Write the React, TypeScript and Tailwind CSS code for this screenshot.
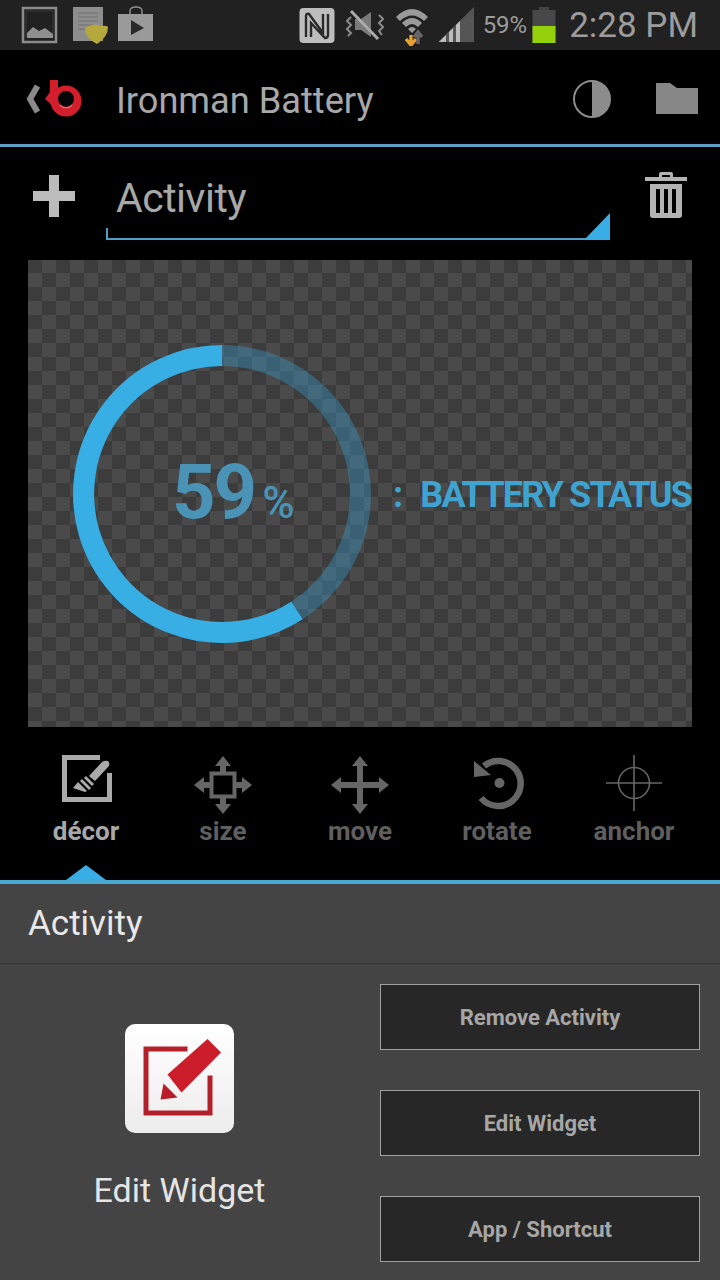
import React from 'react';

const font = { fontFamily: 'Roboto, sans-serif' };

const StatusIcons = () => (
  <>
    <svg width="38" height="38" viewBox="0 0 38 38" className="ml-[21px] shrink-0">
      <rect x="2" y="2" width="33" height="34" fill="none" stroke="#8c8c8c" strokeWidth="2.5" />
      <rect x="5" y="5" width="27" height="26" fill="none" stroke="#3a3a3a" strokeWidth="1" />
      <path d="M6 32 L6 27 L12 21 L18 25 L24 22 L32 28 L32 32 Z" fill="#8f8f8f" />
    </svg>
    <svg width="38" height="40" viewBox="0 0 38 40" className="ml-[13px] shrink-0">
      <rect x="1" y="2" width="30" height="34" fill="#8e8e8e" />
      <path d="M6 8H26M6 12H26M6 16H26M6 20H22M6 24H14" stroke="#6f6f6f" strokeWidth="1" />
      <path d="M13 23 Q22 17 28 21 Q35 20 36 22 Q36 32 25 39 Q13 33 13 23 Z" fill="#b5a93e" />
    </svg>
    <svg width="36" height="38" viewBox="0 0 36 38" className="ml-[8px] shrink-0">
      <path d="M12 9 V5 Q12 1 18 1 Q24 1 24 5 V9" fill="none" stroke="#8e8e8e" strokeWidth="1.5" />
      <rect x="0" y="8" width="35" height="27" fill="#9a9a9a" />
      <path d="M13 14 L26 22 L13 29 Z" fill="#2a2a2a" />
    </svg>
    <div className="flex-1" />
    <svg width="36" height="37" viewBox="0 0 36 37" className="shrink-0">
      <rect x="0.5" y="1" width="35" height="35" rx="4" fill="#bdbdbd" />
      <path d="M7 30 V9 Q7 6 10 7 L24 26 V7 M12 30 V16 L26 31 Q29 31 29 28 V7" fill="none" stroke="#2a2a2a" strokeWidth="2.4" />
    </svg>
    <svg width="38" height="38" viewBox="0 0 38 38" className="ml-[11px] shrink-0">
      <path d="M5 11 L1 15 L5 19 L1 23 L5 27 L2 30" fill="none" stroke="#8a8a8a" strokeWidth="2" />
      <path d="M33 9 L37 13 L33 17 L37 21 L33 25 L36 29" fill="none" stroke="#8a8a8a" strokeWidth="2" />
      <path d="M9 13 H15 L25 6 V31 L15 24 H9 Z" fill="#7a7a7a" />
      <path d="M5 5 L32 33" stroke="#aaaaaa" strokeWidth="3" />
    </svg>
    <svg width="36" height="42" viewBox="0 0 36 42" className="ml-[11px] shrink-0">
      <path d="M1 13 Q17 -3 33 13 L29 17 Q17 6 5 17 Z" fill="#9a9a9a" />
      <path d="M7 19 Q17 9 27 19 L23 23 Q17 17 11 23 Z" fill="#9a9a9a" />
      <path d="M13 25 Q17 21 21 25 L17 29 Z" fill="#9a9a9a" />
      <path d="M16 40 V31 M11 35 L16 41 L21 35" fill="none" stroke="#e8a030" strokeWidth="3.4" />
      <path d="M23 40 V29 M19 33 L23 28 L27 33" fill="none" stroke="#666666" strokeWidth="3.4" />
    </svg>
    <svg width="37" height="36" viewBox="0 0 37 36" className="ml-[7px] shrink-0">
      <path d="M0 35 L36 0 V35 Z" fill="#555555" />
      <path d="M1 35 L8 28 V35 Z" fill="#bdbdbd" />
      <path d="M11 35 V25 L15 21 V35 Z" fill="#bdbdbd" />
      <path d="M18 35 V18 L22 14 V35 Z" fill="#bdbdbd" />
    </svg>
    <span className="ml-[8px] text-[24px] leading-none text-[#9c9c9c] shrink-0" style={font}>59%</span>
    <svg width="24" height="36" viewBox="0 0 24 36" className="ml-[5px] shrink-0">
      <rect x="7" y="0" width="10" height="4" fill="#444444" />
      <rect x="0.5" y="3" width="23" height="33" fill="#484848" />
      <rect x="0.5" y="19" width="23" height="17" fill="#94d10a" />
    </svg>
    <span className="ml-[13px] mr-[22px] text-[35px] leading-none text-[#9c9c9c] shrink-0" style={font}>2:28 PM</span>
  </>
);

const BeatsLogo = () => (
  <svg width="37" height="38" viewBox="0 0 37 38" className="ml-[5px] shrink-0">
    <path d="M5 0 H13 V14 L10 28 L0 19 L5 12 Z" fill="#d21f2b" />
    <circle cx="21" cy="21" r="15.5" fill="#d21f2b" />
    <circle cx="21" cy="19" r="8" fill="#050505" />
    <path d="M15 25 A8 8 0 0 0 27 25" fill="none" stroke="#e8707a" strokeWidth="1.2" />
  </svg>
);

const Decor = () => (
  <svg width="50" height="48" viewBox="0 0 50 48" className="ml-[2px]">
    <path d="M38 2.5 H2.5 V44.5 H47.5 V18" fill="none" stroke="#aaaaaa" strokeWidth="5" />
    <path d="M40 7 Q43 5 46 6 Q48 8 47 11 L33 26 L27 21 Z" fill="#aaaaaa" />
    <path d="M24 21 L32 29 L30 31 L22 23 Z" fill="#aaaaaa" />
    <path d="M20 24 L29 33 L27 35 L18 26 Z" fill="#aaaaaa" />
    <path d="M16 27 L25 36 L23 37 L11 33 Z" fill="#aaaaaa" />
  </svg>
);

const Size = () => (
  <svg width="60" height="60" viewBox="0 0 60 60" fill="#666666">
    <rect x="18.5" y="18.5" width="23" height="23" fill="none" stroke="#666666" strokeWidth="4" />
    <path d="M30 1 L38 11 H33 V17 H27 V11 H22 Z" />
    <path d="M30 59 L38 49 H33 V43 H27 V49 H22 Z" />
    <path d="M1 30 L11 22 V27 H17 V33 H11 V38 Z" />
    <path d="M59 30 L49 22 V27 H43 V33 H49 V38 Z" />
  </svg>
);

const Move = () => (
  <svg width="60" height="60" viewBox="0 0 60 60" fill="#666666">
    <path d="M30 1 L38 11 H33 V27 H49 V22 L59 30 L49 38 V33 H33 V49 H38 L30 59 L22 49 H27 V33 H11 V38 L1 30 L11 22 V27 H27 V11 H22 Z" />
  </svg>
);

const Rotate = () => (
  <svg width="56" height="56" viewBox="0 0 56 56">
    <path d="M15 11 A22.5 22.5 0 1 1 12 43" fill="none" stroke="#666666" strokeWidth="6.5" />
    <path d="M5 6 L5 22 L22 20 Z" fill="#666666" />
    <circle cx="30.5" cy="28" r="5" fill="#666666" />
  </svg>
);

const Anchor = () => (
  <svg width="58" height="58" viewBox="0 0 58 58" fill="none" stroke="#666666" strokeWidth="1.6">
    <circle cx="29" cy="28" r="15.5" />
    <path d="M29 0 V56 M1 28 H57" />
  </svg>
);

const tools = [
  { label: 'décor', icon: <Decor />, color: 'text-[#a8a8a8]' },
  { label: 'size', icon: <Size />, color: 'text-[#5f5f5f]' },
  { label: 'move', icon: <Move />, color: 'text-[#5f5f5f]' },
  { label: 'rotate', icon: <Rotate />, color: 'text-[#5f5f5f]' },
  { label: 'anchor', icon: <Anchor />, color: 'text-[#5f5f5f]' },
];

const EditWidgetIcon = () => (
  <div className="w-[109px] h-[109px] rounded-[10px] bg-gradient-to-b from-white to-[#ececec] flex items-center justify-center">
    <svg width="82" height="80" viewBox="0 0 82 80">
      <path d="M48.5 10 H7 V74 H71 V36.5" fill="none" stroke="#b3202b" strokeWidth="5" />
      <path d="M68.5 0 L82 13.5 L42.5 53.5 L28.5 35.5 Z" fill="#cc1d2b" />
      <path d="M24.5 44.5 L38.5 58.5 L21.5 60.5 Z" fill="#b81c28" />
    </svg>
  </div>
);

const actions = ['Remove Activity', 'Edit Widget', 'App / Shortcut'];

export default function App() {
  return (
    <div className="w-[720px] h-[1280px] bg-black overflow-hidden flex flex-col" style={font}>
      {/* status bar */}
      <div className="h-[50px] bg-[#212121] flex items-center shrink-0">
        <StatusIcons />
      </div>

      {/* action bar */}
      <div className="h-[94px] pt-[3px] flex items-center shrink-0">
        <svg width="14" height="30" viewBox="0 0 14 30" className="ml-[26px] shrink-0">
          <path d="M11.5 2 L4 15 L11.5 28" fill="none" stroke="#8a8a8a" strokeWidth="6" />
        </svg>
        <BeatsLogo />
        <span className="ml-[34px] mt-[5px] text-[36.2px] leading-none text-[#a8a8a8]">Ironman Battery</span>
        <div className="flex-1" />
        <svg width="40" height="40" viewBox="0 0 40 40" className="shrink-0">
          <circle cx="20" cy="20" r="18" fill="none" stroke="#8c8c8c" strokeWidth="2" />
          <path d="M20 2 A18 18 0 0 1 20 38 Z" fill="#8c8c8c" />
        </svg>
        <svg width="42" height="31" viewBox="0 0 42 31" className="ml-[44px] mr-[22px] shrink-0">
          <path d="M0 0 H14 L21 5 H42 V31 H0 Z" fill="#878787" />
        </svg>
      </div>
      <div className="h-[3px] bg-[#5f9fc6] shrink-0" />

      {/* layer name row */}
      <div className="h-[113px] flex shrink-0">
        <div className="w-[106px] pl-[33px] pt-[28px] shrink-0">
          <svg width="42" height="42" viewBox="0 0 42 42">
            <path d="M16 0 H26 V16 H42 V26 H26 V42 H16 V26 H0 V16 H16 Z" fill="#bcbcbc" />
          </svg>
        </div>
        <div className="relative w-[504px] h-[93px] shrink-0">
          <div className="pl-[10px] pt-[28px] text-[41px] leading-[46px] text-[#a8a8a8] tracking-[-0.5px]">Activity</div>
          <div className="absolute left-0 bottom-0 w-full h-[12px] border-l-2 border-b-2 border-[#4d9fca]" />
          <svg width="26" height="27" viewBox="0 0 26 27" className="absolute right-0 bottom-0">
            <path d="M0 27 L26 0 V27 Z" fill="#38ade6" />
          </svg>
        </div>
        <div className="flex-1 pl-[35px] pt-[25px]">
          <svg width="42" height="46" viewBox="0 0 42 46" fill="#b4b4b4">
            <path d="M14 5 V2 Q14 0 16 0 H26 Q28 0 28 2 V5 H42 V9 H0 V5 Z M17 5 H25 V3 H17 Z" fillRule="evenodd" />
            <path d="M5 12 H37 V43 Q37 46 34 46 H8 Q5 46 5 43 Z M11 17 V41 H15 V17 Z M19 17 V41 H23 V17 Z M27 17 V41 H31 V17 Z" fillRule="evenodd" />
          </svg>
        </div>
      </div>

      {/* canvas */}
      <div className="mx-[28px] h-[467px] relative overflow-hidden shrink-0 bg-[conic-gradient(#4a4a4a_25%,#3c3c3c_0_50%,#4a4a4a_0_75%,#3c3c3c_0)] bg-[length:28px_28px] bg-[position:0_-1px]">
        <svg width="300" height="300" viewBox="0 0 300 300" className="absolute left-[44px] top-[84px]">
          <circle cx="150" cy="150" r="138.5" fill="none" stroke="#37aee4" strokeOpacity="0.33" strokeWidth="21" />
          <path d="M150 11.5 A138.5 138.5 0 1 0 225 266.5" fill="none" stroke="#37aee4" strokeWidth="21" />
        </svg>
        <div className="absolute left-[144px] top-[194px] flex items-baseline text-[#4a93b6] font-bold leading-none">
          <span className="text-[76px] tracking-[-2px]">59</span>
          <span className="text-[44px] ml-[7px] font-medium">%</span>
        </div>
        <div className="absolute left-[365px] top-[215px] whitespace-nowrap text-[36px] leading-[40px] font-bold text-[#3fa3d2] tracking-[-1.85px]">
          <span className="mr-[19px]">:</span>BATTERY STATUS
        </div>
      </div>

      {/* tool tabs */}
      <div className="relative h-[153px] px-[17.5px] grid grid-cols-5 shrink-0">
        {tools.map((tool) => (
          <div key={tool.label} className="flex flex-col items-center">
            <div className="h-[88px] pt-[28px] flex items-start justify-center">{tool.icon}</div>
            <span className={`text-[26px] leading-[32px] font-bold ${tool.color}`}>{tool.label}</span>
          </div>
        ))}
        <svg width="40" height="15" viewBox="0 0 40 15" className="absolute left-[66px] bottom-0">
          <path d="M0 15 L20 0 L40 15 Z" fill="#38ade6" />
        </svg>
      </div>
      <div className="h-[4px] bg-[#45a9d2] shrink-0" />

      {/* bottom panel */}
      <div className="flex-1 bg-[#444444] flex flex-col min-h-0">
        <div className="h-[80px] pl-[28px] flex items-center border-b border-[#303030] shrink-0">
          <span className="text-[35px] leading-none text-[#e8e8e8]">Activity</span>
        </div>
        <div className="flex flex-1 min-h-0">
          <div className="w-[359px] pt-[60px] flex flex-col items-center shrink-0">
            <EditWidgetIcon />
            <span className="mt-[36px] text-[34px] leading-[42px] text-[#e4e4e4]">Edit Widget</span>
          </div>
          <div className="pl-[21px] pt-[20px] flex flex-col gap-[40px]">
            {actions.map((action) => (
              <div key={action} className="w-[320px] h-[66px] pt-[1px] bg-[#272727] border border-[#a0a0a0] flex items-center justify-center text-[22px] font-bold text-[#a6a6a6]">
                {action}
              </div>
            ))}
          </div>
        </div>
      </div>
    </div>
  );
}
